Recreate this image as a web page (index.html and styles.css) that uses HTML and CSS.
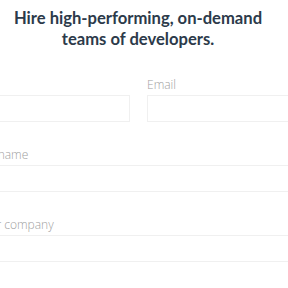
FILE: index.html
```html
<!DOCTYPE html>
<html lang="en">
<head>
    <meta charset="UTF-8">
    <meta name="viewport" content="width=device-width, initial-scale=1.0">
    <title>Hire developers</title>
    <link rel="stylesheet" href="styles.css">
</head>
<body>
    <h1 class="headline">Hire high-performing, on-demand teams of developers.</h1>

    <form class="hire-form">
        <div class="field">
            <label class="spacer"></label>
            <input type="text">
        </div>
        <div class="field">
            <label>Email</label>
            <input type="email">
        </div>
        <div class="field wide">
            <label>Full name</label>
            <input type="text">
        </div>
        <div class="field wide">
            <label>Your company</label>
            <input type="text">
        </div>
    </form>
</body>
</html>
```

FILE: styles.css
```css
body {
    margin: 0;
    background-color: #fff;
    font-family: "Open Sans", sans-serif;
    overflow: hidden;
}
.headline {
    margin: 8px auto 0;
    width: 270px;
    padding-right: 12px;
    text-align: center;
    font-family: Lato, "Open Sans", sans-serif;
    font-size: 16.6px;
    line-height: 21px;
    font-weight: 700;
    color: #2c3a4a;
}
.hire-form {
    margin-top: 27px;
    margin-left: -24px;
    width: 340px;
    display: grid;
    grid-template-columns: 154px 1fr;
    column-gap: 17px;
    row-gap: 25px;
}
.field {
    display: flex;
    flex-direction: column;
}
.wide {
    grid-column: 1 / 3;
}
.field label {
    height: 16px;
    font-size: 12px;
    font-weight: 300;
    line-height: 16px;
    color: #a0a0a0;
    margin-bottom: 2px;
}
.field input {
    height: 27px;
    box-sizing: border-box;
    border: 1px solid #f0f0f0;
    background: #fff;
    outline: none;
}
```
